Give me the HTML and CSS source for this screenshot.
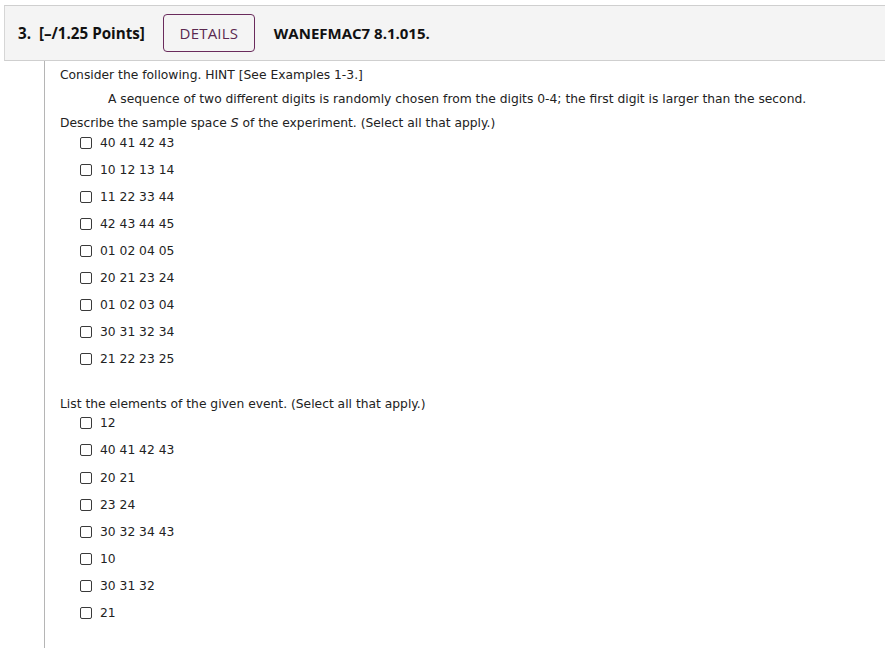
FILE: index.html
```html
<!DOCTYPE html>
<html>
<head>
<meta charset="utf-8">
<link rel="stylesheet" href="styles.css">
</head>
<body>
<div class="question">
  <div class="qhead">
    <span class="qnum">3.&nbsp; [–/1.25 Points]</span>
    <span class="details">DETAILS</span>
    <span class="qcode">WANEFMAC7 8.1.015.</span>
  </div>
  <div class="qbody">
    <p class="line">Consider the following. HINT [See Examples 1-3.]</p>
    <p class="line indent">A sequence of two different digits is randomly chosen from the digits 0-4; the first digit is larger than the second.</p>
    <p class="line">Describe the sample space <i>S</i> of the experiment. (Select all that apply.)</p>
    <ul class="opts first">
      <li><span class="box"></span>40 41 42 43</li>
      <li><span class="box"></span>10 12 13 14</li>
      <li><span class="box"></span>11 22 33 44</li>
      <li><span class="box"></span>42 43 44 45</li>
      <li><span class="box"></span>01 02 04 05</li>
      <li><span class="box"></span>20 21 23 24</li>
      <li><span class="box"></span>01 02 03 04</li>
      <li><span class="box"></span>30 31 32 34</li>
      <li><span class="box"></span>21 22 23 25</li>
    </ul>
    <p class="line second">List the elements of the given event. (Select all that apply.)</p>
    <ul class="opts event">
      <li><span class="box"></span>12</li>
      <li><span class="box"></span>40 41 42 43</li>
      <li><span class="box"></span>20 21</li>
      <li><span class="box"></span>23 24</li>
      <li><span class="box"></span>30 32 34 43</li>
      <li><span class="box"></span>10</li>
      <li><span class="box"></span>30 31 32</li>
      <li><span class="box"></span>21</li>
    </ul>
  </div>
</div>
</body>
</html>
```
FILE: styles.css
```css
html, body {
  margin: 0;
  padding: 0;
  background: #fff;
  overflow: hidden;
}
body {
  padding: 5px 0 0 4px;
  font-family: "DejaVu Sans", Verdana, sans-serif;
  color: #222;
}
.question {
  width: 900px;
}
.qhead {
  display: flex;
  align-items: center;
  height: 54px;
  background: #f4f4f4;
  border-top: 1px solid #cfcfcf;
  border-bottom: 1px solid #cfcfcf;
  border-left: 1px solid #d6d6d6;
  font-family: "Open Sans", "Noto Sans", sans-serif;
  font-size: 15.2px;
  color: #111;
}
.qnum {
  font-weight: 700;
  margin-left: 13px;
}
.details {
  display: flex;
  align-items: center;
  justify-content: center;
  box-sizing: border-box;
  width: 92px;
  height: 38px;
  margin-left: 18px;
  border: 1px solid #6a2b5c;
  border-radius: 4px;
  color: #5a2850;
  font-size: 15px;
  font-weight: 400;
  letter-spacing: 0.2px;
}
.qcode {
  font-weight: 700;
  font-size: 15px;
  margin-left: 19px;
}
.qbody {
  box-sizing: border-box;
  height: calc(100vh - 61px);
  margin-left: 40px;
  border-left: 1px solid #b5b5b5;
  padding: 6px 0 0 15px;
  font-size: 12.3px;
}
.line {
  margin: 0;
  height: 24px;
  line-height: 16px;
}
.indent {
  padding-left: 48px;
}
.second {
  margin-top: 23px;
  height: 21px;
}
.opts {
  list-style: none;
  margin: 0;
  padding: 0 0 0 20px;
}
.opts li {
  display: flex;
  align-items: center;
  height: 27.1px;
  line-height: 16px;
}
.opts.first {
  margin-top: -10px;
}
.opts.event {
  margin-top: -7px;
}
.box {
  display: inline-block;
  box-sizing: border-box;
  width: 12px;
  height: 12px;
  border: 1px solid #3a3a3a;
  border-radius: 2px;
  margin-right: 8px;
  background: #fff;
}
```
